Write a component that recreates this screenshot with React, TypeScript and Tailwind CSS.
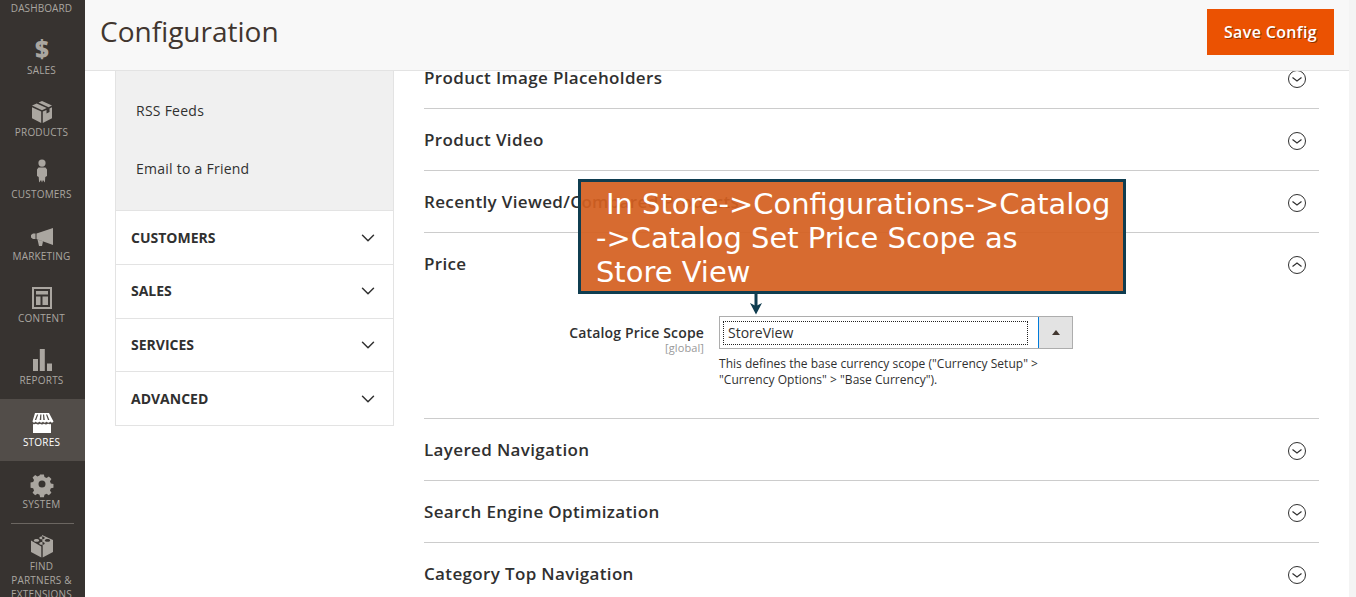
import { ChevronDown } from "lucide-react";
import type { ReactNode } from "react";

const font = "font-['Open_Sans','Noto_Sans',sans-serif]";

const icons: Record<string, ReactNode> = {
  sales: (
    <text x="12" y="20" textAnchor="middle" fontSize="24" fontWeight="800" fontFamily="'Open Sans'" fill="currentColor">
      $
    </text>
  ),
  products: (
    <path
      d="M12 1l10 4.500-3.500 1.700L8.500 2.600zM6.700 3.500l10 4.600L12 10.200 2 5.600zM2 7.300l9.200 4.300V23L2 18.200zM22 7.300v10.900L12.800 23V11.600l3.700-1.700v3.600l3-1.400V8.500z"
      fill="currentColor"
    />
  ),
  customers: (
    <path
      d="M12 0.500a3.600 3.600 0 110 7.200 3.600 3.600 0 010-7.200zM8.500 8.500h7l1.500 2v6.500l-1.700 1-.4 5.500-1.900-2.500-1 2.500-1-2.500-1.900 2.500-.4-5.500-1.700-1v-6.500z"
      fill="currentColor"
      transform="translate(0 -3)"
    />
  ),
  marketing: (
    <path d="M23 4v17L6.500 15V9.500zM5.500 9.500v5.500H3L1 13.500v-2.500L3 9.500zM7.500 15.500l5.500 2-1 4.500H9z" fill="currentColor" />
  ),
  content: (
    <path
      fillRule="evenodd"
      d="M2 1h20v22H2zM4 3v18h16V3zM6 5h12v3.500H6zM6 10.500h4.500V19H6zM12.500 10.500H18V19h-5.500z"
      fill="currentColor"
    />
  ),
  reports: <path d="M3 11h5v12H3zM9.800 1h5v22h-5zM17 15.500h5V23h-5z" fill="currentColor" />,
  stores: (
    <path
      fillRule="evenodd"
      d="M5 3h14l4.500 8.500c-.5 1.500-2.500 1.500-3.200 0-.7 1.500-3 1.500-3.700 0-.7 1.500-3 1.500-3.600 0-.6 1.500-2.900 1.500-3.600 0-.7 1.500-3 1.500-3.700 0-.7 1.500-2.700 1.500-3.200 0zM7 4.500L4.800 10h1.400l2-5.500zM10.300 4.500L9.700 10h1.500l.2-5.500zM13 4.500l.3 5.500h1.500l-.7-5.500zM16 4.500l2 5.500h1.400l-2.200-5.500zM3 14c1 .4 1.800.3 3-.2 1.500.8 2.700.8 4 0 1.300.8 2.700.8 4 0 1.300.8 2.500.8 4 0 1.200.5 2 .6 3 .2v9H3z"
      fill="currentColor"
    />
  ),
  system: (
    <path
      fillRule="evenodd"
      d="M9.800 1h4.400l.6 3 2.400 1 2.600-1.700 3 3-1.700 2.600 1 2.400 3 .6v4.400l-3 .6-1 2.400 1.700 2.600-3 3-2.600-1.700-2.400 1-.6 3H9.800l-.6-3-2.400-1-2.600 1.700-3-3 1.700-2.600-1-2.400-3-.6V10.300l3-.6 1-2.400-1.700-2.600 3-3 2.600 1.700 2.400-1zM12 8a4 4 0 100 8 4 4 0 000-8z"
      fill="currentColor"
      transform="translate(1.500 1.500) scale(.875)"
    />
  ),
  partners: (
    <path
      fillRule="evenodd"
      d="M12 1l11 5v12l-10.300 5.500V12.500zM11.300 12.500v11L1 18V6.500zM12 2.500c-1.500 0-2.700.6-2.700 1.400S10.500 5.300 12 5.300s2.700-.6 2.700-1.400-1.200-1.400-2.700-1.400zM6.500 5c-1.500 0-2.700.6-2.700 1.400s1.200 1.400 2.700 1.400 2.700-.6 2.700-1.400S8 5 6.500 5zM17.500 5c-1.500 0-2.700.6-2.700 1.400s1.200 1.400 2.700 1.400 2.700-.6 2.700-1.400-1.200-1.400-2.700-1.400zM12 8c-1.500 0-2.700.6-2.700 1.400s1.200 1.400 2.700 1.400 2.700-.6 2.700-1.400S13.500 8 12 8z"
      fill="currentColor"
    />
  ),
};

function NavItem({ icon, label, active }: { icon: string; label: string; active?: boolean }) {
  return (
    <div
      className={`h-[62px] shrink-0 flex flex-col items-center pt-[11px] pr-[2px] ${active ? "bg-[#524d49] text-white" : "text-[#aaa6a0]"}`}
    >
      <svg viewBox="0 0 24 24" className="w-6 h-6 overflow-visible">
        {icons[icon]}
      </svg>
      <span className="mt-[1px] text-[10px] leading-[14px] tracking-[0.2px] uppercase">{label}</span>
    </div>
  );
}

function Sidebar() {
  return (
    <aside className="w-[85px] shrink-0 bg-[#373330] flex flex-col overflow-hidden">
      <div className="text-[10px] leading-[14px] tracking-[0.1px] uppercase text-[#aaa6a0] text-center pr-[2px] mt-[1px] mb-[12px]">
        Dashboard
      </div>
      <NavItem icon="sales" label="Sales" />
      <NavItem icon="products" label="Products" />
      <NavItem icon="customers" label="Customers" />
      <NavItem icon="marketing" label="Marketing" />
      <NavItem icon="content" label="Content" />
      <NavItem icon="reports" label="Reports" />
      <NavItem icon="stores" label="Stores" active />
      <NavItem icon="system" label="System" />
      <div className="mx-[11px] border-t border-[#6b6661]" />
      <div className="flex flex-col items-center pt-[10px] pr-[2px] text-[#aaa6a0]">
        <svg viewBox="0 0 24 24" className="w-6 h-6">
          {icons.partners}
        </svg>
        <span className="mt-[1px] text-[10px] leading-[14px] tracking-[0.2px] uppercase text-center">
          Find
          <br />
          Partners &amp;
          <br />
          Extensions
        </span>
      </div>
    </aside>
  );
}

function CircleChevron({ up }: { up?: boolean }) {
  return (
    <svg viewBox="0 0 20 20" className="w-5 h-5 text-[#303030]" fill="none" stroke="currentColor">
      <circle cx="10" cy="10" r="8.500" />
      <path d={up ? "M5.500 11.500L10 8l4.500 3.500" : "M5.500 8.500L10 12l4.500-3.500"} strokeWidth="1.200" />
    </svg>
  );
}

function Section({ title, up, children }: { title: string; up?: boolean; children?: ReactNode }) {
  return (
    <section className="border-b border-[#cccccc]">
      <div className="h-[61px] flex items-center justify-between">
        <h3 className="text-[17px] font-semibold tracking-[0.35px] text-[#303030]">{title}</h3>
        <span className="mr-[12px] mt-[2px]">
          <CircleChevron up={up} />
        </span>
      </div>
      {children}
    </section>
  );
}

function LeftNav() {
  return (
    <div className="w-[279px] shrink-0 border-x border-[#e3e3e3]">
      <div className="h-[140.300px] bg-[#f0f0f0] border-b border-[#e3e3e3] pl-5 pt-[11px] text-sm tracking-[0.25px] text-[#303030]">
        <div className="h-[58px] flex items-center">RSS Feeds</div>
        <div className="h-[58px] flex items-center">Email to a Friend</div>
      </div>
      {["Customers", "Sales", "Services", "Advanced"].map((t) => (
        <div
          key={t}
          className="h-[53.700px] border-b border-[#e3e3e3] pl-[15px] pr-[14px] flex items-center justify-between text-sm font-bold uppercase text-[#303030]"
        >
          {t}
          <ChevronDown size={22} strokeWidth={1.600} />
        </div>
      ))}
    </div>
  );
}

function PriceField() {
  return (
    <div className="h-[124px] pt-[22px] flex text-[#303030]">
      <div className="w-[280px] text-right pt-[7px]">
        <div className="text-sm font-semibold tracking-[0.16px] leading-[20px]">Catalog Price Scope</div>
        <div className="text-[11px] tracking-[0.1px] leading-[10px] text-[#999999]">[global]</div>
      </div>
      <div className="ml-[15px] w-[354px]">
        <div className="h-[33px] flex border border-[#adadad] bg-white">
          <div className="flex-1 flex items-center pl-[4px] pr-[11px]">
            <div className="w-full h-[22px] outline-1 outline-dotted outline-[#222222] flex items-center pl-[4px] text-sm">
              StoreView
            </div>
          </div>
          <div className="w-[34px] bg-[#e3e3e3] border-l border-[#007bdb] flex items-center justify-center">
            <div className="w-0 h-0 border-x-[4px] border-x-transparent border-b-[5px] border-b-[#41362f]" />
          </div>
        </div>
        <p className="mt-[7px] text-xs tracking-[0.02px] leading-4">
          This defines the base currency scope ("Currency Setup" &gt; "Currency Options" &gt; "Base Currency").
        </p>
      </div>
    </div>
  );
}

export default function App() {
  return (
    <div className={`${font} relative h-[597px] overflow-hidden flex bg-white`}>
      <Sidebar />
      <main className="flex-1 min-w-0 flex flex-col">
        <header className="h-[71px] shrink-0 bg-[#f8f8f8] border-b border-[#e3e3e3] flex items-start justify-between pl-[15px] pr-[15px] relative z-10">
          <h1 className="text-[28px] mt-[10px] text-[#41362f]">Configuration</h1>
          <button className="mt-[9px] h-[46px] w-[127px] bg-[#eb5202] text-white text-base font-semibold tracking-[0.35px] [text-shadow:1px_1px_0_#8f3201]">
            Save Config
          </button>
        </header>
        <div className="flex pl-[30px] pr-[30px] -mt-[24px] gap-[30px]">
          <div className="pt-[24px]">
            <LeftNav />
          </div>
          <div className="flex-1 min-w-0">
            <Section title="Product Image Placeholders" />
            <Section title="Product Video" />
            <Section title="Recently Viewed/Compared Products" />
            <Section title="Price" up>
              <PriceField />
            </Section>
            <Section title="Layered Navigation" />
            <Section title="Search Engine Optimization" />
            <Section title="Category Top Navigation" />
          </div>
        </div>
      </main>
      <div className="w-[7px] shrink-0 bg-[#f4f4f4]" />
      <div className="absolute left-[578px] top-[179px] w-[548px] h-[115px] border-[3px] border-[#0f3d50] bg-[#d46020]/[0.93] text-white font-['DejaVu_Sans',sans-serif] text-[28.950px] leading-[34px] pt-[5px] pl-[15px]">
        <div className="pl-[10px]">In Store-&gt;Configurations-&gt;Catalog</div>
        <div>-&gt;Catalog Set Price Scope as</div>
        <div>Store View</div>
      </div>
      <svg className="absolute left-[750px] top-[293px] w-3 h-[22px]" viewBox="0 0 12 22">
        <path d="M6 0v14" stroke="#0f3d50" strokeWidth="3" />
        <path d="M0 10l6 3 6-3-6 11.500z" fill="#0f3d50" />
      </svg>
    </div>
  );
}
